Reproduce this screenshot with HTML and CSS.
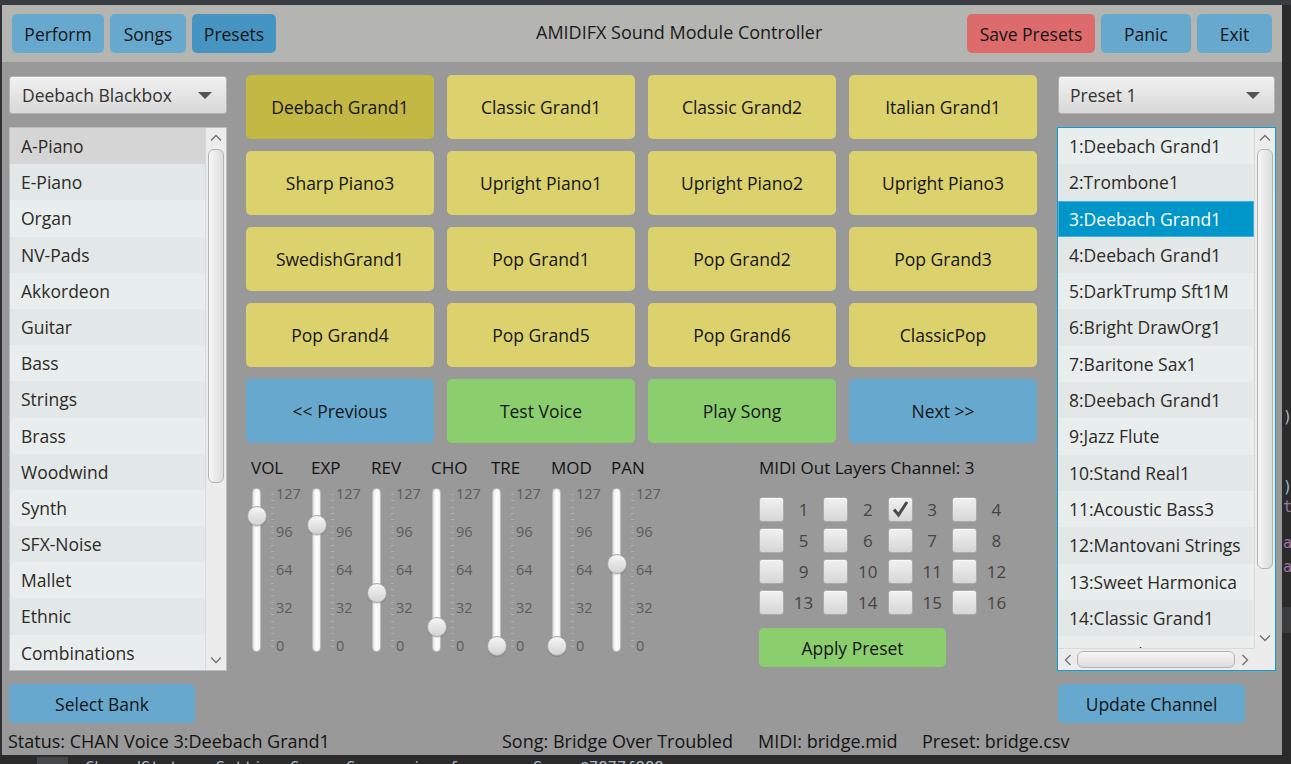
FILE: index.html
```html
<!DOCTYPE html>
<html lang="en">
<head>
<meta charset="utf-8">
<title>AMIDIFX Sound Module Controller</title>
<link rel="stylesheet" href="styles.css">
</head>
<body>
<div class="screen">
  <div class="top-edge"></div>
  <div class="mid">
    <div class="left-edge"></div>
    <div class="window">
      <header class="topbar">
        <div class="group">
          <button class="btn blue w-perform">Perform</button>
          <button class="btn blue w-songs">Songs</button>
          <button class="btn blue active w-presets">Presets</button>
        </div>
        <div class="title">AMIDIFX Sound Module Controller</div>
        <div class="group right-group">
          <button class="btn red w-save">Save Presets</button>
          <button class="btn blue w-panic">Panic</button>
          <button class="btn blue w-exit">Exit</button>
        </div>
      </header>

      <main class="main">
        <section class="side">
          <div class="combo"><span>Deebach Blackbox</span><span class="caret"></span></div>
          <div class="list">
            <ul class="rows">
              <li class="hover">A-Piano</li>
              <li>E-Piano</li>
              <li>Organ</li>
              <li>NV-Pads</li>
              <li>Akkordeon</li>
              <li>Guitar</li>
              <li>Bass</li>
              <li>Strings</li>
              <li>Brass</li>
              <li>Woodwind</li>
              <li>Synth</li>
              <li>SFX-Noise</li>
              <li>Mallet</li>
              <li>Ethnic</li>
              <li>Combinations</li>
            </ul>
            <div class="vscroll">
              <div class="arr"><svg width="12" height="8" viewBox="0 0 12 8"><polyline points="1,6.5 6,1.5 11,6.5" fill="none" stroke="#707070" stroke-width="1.3"/></svg></div>
              <div class="vtrack"><div class="vthumb left-thumb"></div></div>
              <div class="arr"><svg width="12" height="8" viewBox="0 0 12 8"><polyline points="1,1.5 6,6.5 11,1.5" fill="none" stroke="#707070" stroke-width="1.3"/></svg></div>
            </div>
          </div>
          <button class="btn blue side-btn">Select Bank</button>
        </section>

        <section class="center">
          <div class="voices">
            <button class="btn yellow sel">Deebach Grand1</button>
            <button class="btn yellow">Classic Grand1</button>
            <button class="btn yellow">Classic Grand2</button>
            <button class="btn yellow">Italian Grand1</button>
            <button class="btn yellow">Sharp Piano3</button>
            <button class="btn yellow">Upright Piano1</button>
            <button class="btn yellow">Upright Piano2</button>
            <button class="btn yellow">Upright Piano3</button>
            <button class="btn yellow">SwedishGrand1</button>
            <button class="btn yellow">Pop Grand1</button>
            <button class="btn yellow">Pop Grand2</button>
            <button class="btn yellow">Pop Grand3</button>
            <button class="btn yellow">Pop Grand4</button>
            <button class="btn yellow">Pop Grand5</button>
            <button class="btn yellow">Pop Grand6</button>
            <button class="btn yellow">ClassicPop</button>
            <button class="btn blue">&lt;&lt; Previous</button>
            <button class="btn green">Test Voice</button>
            <button class="btn green">Play Song</button>
            <button class="btn blue">Next &gt;&gt;</button>
          </div>

          <div class="lower">
            <div class="sliders">
              <div class="slider">
                <div class="slabel">VOL</div>
                <div class="sbody">
                  <div class="track"></div><div class="ticks"></div>
                  <div class="nums"><span>127</span><span>96</span><span>64</span><span>32</span><span>0</span></div>
                  <div class="thumb" style="top:18px"></div>
                </div>
              </div>
              <div class="slider">
                <div class="slabel">EXP</div>
                <div class="sbody">
                  <div class="track"></div><div class="ticks"></div>
                  <div class="nums"><span>127</span><span>96</span><span>64</span><span>32</span><span>0</span></div>
                  <div class="thumb" style="top:27px"></div>
                </div>
              </div>
              <div class="slider">
                <div class="slabel">REV</div>
                <div class="sbody">
                  <div class="track"></div><div class="ticks"></div>
                  <div class="nums"><span>127</span><span>96</span><span>64</span><span>32</span><span>0</span></div>
                  <div class="thumb" style="top:95px"></div>
                </div>
              </div>
              <div class="slider">
                <div class="slabel">CHO</div>
                <div class="sbody">
                  <div class="track"></div><div class="ticks"></div>
                  <div class="nums"><span>127</span><span>96</span><span>64</span><span>32</span><span>0</span></div>
                  <div class="thumb" style="top:129px"></div>
                </div>
              </div>
              <div class="slider">
                <div class="slabel">TRE</div>
                <div class="sbody">
                  <div class="track"></div><div class="ticks"></div>
                  <div class="nums"><span>127</span><span>96</span><span>64</span><span>32</span><span>0</span></div>
                  <div class="thumb" style="top:148px"></div>
                </div>
              </div>
              <div class="slider">
                <div class="slabel">MOD</div>
                <div class="sbody">
                  <div class="track"></div><div class="ticks"></div>
                  <div class="nums"><span>127</span><span>96</span><span>64</span><span>32</span><span>0</span></div>
                  <div class="thumb" style="top:148px"></div>
                </div>
              </div>
              <div class="slider">
                <div class="slabel">PAN</div>
                <div class="sbody">
                  <div class="track"></div><div class="ticks"></div>
                  <div class="nums"><span>127</span><span>96</span><span>64</span><span>32</span><span>0</span></div>
                  <div class="thumb" style="top:66px"></div>
                </div>
              </div>
            </div>

            <div class="layers">
              <div class="ltitle">MIDI Out Layers Channel: 3</div>
              <div class="cbgrid">
                <div class="cell"><span class="cb"></span><span class="cbl">1</span></div>
                <div class="cell"><span class="cb"></span><span class="cbl">2</span></div>
                <div class="cell"><span class="cb"><svg width="23" height="23" viewBox="0 0 23 23"><polyline points="5,11.5 9.5,17 18,4" fill="none" stroke="#4a4a4a" stroke-width="3"/></svg></span><span class="cbl">3</span></div>
                <div class="cell"><span class="cb"></span><span class="cbl">4</span></div>
                <div class="cell"><span class="cb"></span><span class="cbl">5</span></div>
                <div class="cell"><span class="cb"></span><span class="cbl">6</span></div>
                <div class="cell"><span class="cb"></span><span class="cbl">7</span></div>
                <div class="cell"><span class="cb"></span><span class="cbl">8</span></div>
                <div class="cell"><span class="cb"></span><span class="cbl">9</span></div>
                <div class="cell"><span class="cb"></span><span class="cbl">10</span></div>
                <div class="cell"><span class="cb"></span><span class="cbl">11</span></div>
                <div class="cell"><span class="cb"></span><span class="cbl">12</span></div>
                <div class="cell"><span class="cb"></span><span class="cbl">13</span></div>
                <div class="cell"><span class="cb"></span><span class="cbl">14</span></div>
                <div class="cell"><span class="cb"></span><span class="cbl">15</span></div>
                <div class="cell"><span class="cb"></span><span class="cbl">16</span></div>
              </div>
              <button class="btn green apply">Apply Preset</button>
            </div>
          </div>
        </section>

        <section class="side rside">
          <div class="combo"><span>Preset 1</span><span class="caret"></span></div>
          <div class="list focused">
            <ul class="rows">
              <li>1:Deebach Grand1</li>
              <li>2:Trombone1</li>
              <li class="selected">3:Deebach Grand1</li>
              <li>4:Deebach Grand1</li>
              <li>5:DarkTrump Sft1M</li>
              <li>6:Bright DrawOrg1</li>
              <li>7:Baritone Sax1</li>
              <li>8:Deebach Grand1</li>
              <li>9:Jazz Flute</li>
              <li>10:Stand Real1</li>
              <li>11:Acoustic Bass3</li>
              <li>12:Mantovani Strings</li>
              <li>13:Sweet Harmonica</li>
              <li>14:Classic Grand1</li>
              <li>15:Upright Piano1</li>
            </ul>
            <div class="vscroll">
              <div class="arr"><svg width="12" height="8" viewBox="0 0 12 8"><polyline points="1,6.5 6,1.5 11,6.5" fill="none" stroke="#707070" stroke-width="1.3"/></svg></div>
              <div class="vtrack"><div class="vthumb right-thumb"></div></div>
              <div class="arr"><svg width="12" height="8" viewBox="0 0 12 8"><polyline points="1,1.5 6,6.5 11,1.5" fill="none" stroke="#707070" stroke-width="1.3"/></svg></div>
            </div>
            <div class="hscroll">
              <div class="harr"><svg width="8" height="12" viewBox="0 0 8 12"><polyline points="6.5,1 1.5,6 6.5,11" fill="none" stroke="#707070" stroke-width="1.3"/></svg></div>
              <div class="htrack"><div class="hthumb"></div></div>
              <div class="harr"><svg width="8" height="12" viewBox="0 0 8 12"><polyline points="1.5,1 6.5,6 1.5,11" fill="none" stroke="#707070" stroke-width="1.3"/></svg></div>
            </div>
            <div class="corner"></div>
          </div>
          <button class="btn blue side-btn update">Update Channel</button>
        </section>
      </main>

      <footer class="status">
        <span>Status: CHAN Voice 3:Deebach Grand1</span>
        <span>Song: Bridge Over Troubled</span>
        <span>MIDI: bridge.mid</span>
        <span>Preset: bridge.csv</span>
      </footer>
    </div>
    <div class="right-edge">
      <span class="g g1">)</span>
      <span class="g g2">)</span>
      <span class="g g3 purple">t</span>
      <span class="g g4 purple">a</span>
      <span class="g g5 purple">a</span>
      <span class="band"></span>
    </div>
  </div>
  <div class="bottom-edge">
    <span class="ide-icon"></span>
    <span class="ide-text">CharedStatus: Setting Songs Scene: javafx.scene.Scene@7877f888</span>
  </div>
</div>
</body>
</html>
```

FILE: styles.css
```css
* { box-sizing: border-box; }

html, body {
  margin: 0;
  padding: 0;
}

body {
  width: 1291px;
  height: 764px;
  overflow: hidden;
  background: #2b2b2b;
  font-family: "Open Sans", "Noto Sans", sans-serif;
  color: #1a1a1a;
}

.screen {
  display: flex;
  flex-direction: column;
  width: 1291px;
  height: 764px;
}

.top-edge {
  height: 5px;
  background: #393c40;
}

.mid {
  display: flex;
  height: 750px;
}

.left-edge {
  width: 2px;
  background: #2f3134;
}

.window {
  width: 1280px;
  height: 750px;
  display: flex;
  flex-direction: column;
  background: #999999;
}

/* ---------- top bar ---------- */
.topbar {
  height: 57px;
  flex: none;
  background: #b4b5b1;
  display: flex;
  align-items: flex-start;
  padding: 9px 10px 0 10px;
}

.group {
  display: flex;
  gap: 6px;
}

.right-group {
  margin-left: auto;
}

.title {
  margin-left: 260px;
  height: 36px;
  line-height: 36px;
  font-size: 18px;
  color: #1a1a1a;
}

.btn {
  border: none;
  border-radius: 5px;
  font-family: inherit;
  font-size: 17.5px;
  color: #161616;
  padding: 0;
  height: 40px;
  cursor: default;
}

.topbar .btn {
  height: 39px;
}

.blue { background: #67a8cf; }
.blue.active { background: #4694c1; }
.red { background: #dd6b6b; }
.yellow { background: #dbd16d; }
.yellow.sel { background: #c3b843; }
.green { background: #8bce6e; }

.w-perform { width: 92px; }
.w-songs { width: 76px; }
.w-presets { width: 84px; }
.w-save { width: 128px; }
.w-panic { width: 90px; }
.w-exit { width: 75px; }

/* ---------- main ---------- */
.main {
  flex: none;
  height: 661px;
  display: grid;
  grid-template-columns: 218px 791px 220px;
  column-gap: 19px;
  padding: 13px 0 0 7px;
}

.side {
  display: flex;
  flex-direction: column;
}

.rside {
  margin-left: 1px;
}

.combo {
  margin-top: 1px;
  height: 38px;
  border: 1px solid #b2b2b2;
  border-radius: 3px;
  background: linear-gradient(#f1f1f1, #d8d8d8);
  box-shadow: inset 0 1px 0 #fafafa;
  display: flex;
  align-items: center;
  justify-content: space-between;
  padding: 0 14px 0 12px;
  font-size: 17.5px;
  color: #333;
}

.rside .combo {
  margin-left: 1px;
  margin-right: 1px;
  padding-left: 11px;
}

.caret {
  width: 0;
  height: 0;
  border-left: 7px solid transparent;
  border-right: 7px solid transparent;
  border-top: 7px solid #545454;
}

.list {
  margin-top: 13px;
  height: 544px;
  border: 1px solid #bdbdbd;
  background: #e8eded;
  display: grid;
  grid-template-columns: 1fr 21px;
  overflow: hidden;
}

.list.focused {
  border-color: #0a9fd6;
  grid-template-rows: 1fr 22px;
}

.rows {
  list-style: none;
  margin: 0;
  padding: 0;
  overflow: hidden;
  font-size: 17.5px;
  color: #2e2a26;
}

.rows li {
  height: 36.2px;
  line-height: 36px;
  padding-left: 11px;
  background: #e8eeee;
  white-space: nowrap;
}

.focused .rows li {
  height: 36.3px;
  line-height: 36.3px;
}

.rows li:nth-child(even) {
  background: #e2e7e7;
}

.rows li.hover {
  background: #d5d5d5;
}

.rows li.selected {
  background: #0096c9;
  color: #ffffff;
  box-shadow: inset 0 0 0 1px #49b2d9;
}

.vscroll {
  display: flex;
  flex-direction: column;
  background: #ececec;
  border-left: 1px solid #dadada;
}

.arr {
  height: 20px;
  flex: none;
  display: flex;
  align-items: center;
  justify-content: center;
}

.vtrack {
  flex: 1;
}

.vthumb {
  margin: 1px 2px 0 2px;
  border: 1px solid #b3b3b3;
  border-radius: 6px;
  background: linear-gradient(to right, #f6f6f6, #dcdcdc);
}

.left-thumb { height: 334px; }
.right-thumb { height: 420px; }

.hscroll {
  display: flex;
  background: #ececec;
  border-top: 1px solid #dadada;
}

.harr {
  width: 19px;
  flex: none;
  display: flex;
  align-items: center;
  justify-content: center;
}

.htrack {
  flex: 1;
  display: flex;
  align-items: center;
}

.hthumb {
  width: 100%;
  height: 17px;
  border: 1px solid #b3b3b3;
  border-radius: 6px;
  background: linear-gradient(#f6f6f6, #dcdcdc);
}

.corner {
  background: #ececec;
}

.side-btn {
  margin-top: 13px;
  height: 39px;
  width: 186px;
}

.side-btn.update {
  margin-left: 1px;
  width: 187px;
}

/* ---------- center ---------- */
.center {
  display: flex;
  flex-direction: column;
}

.voices {
  display: grid;
  grid-template-columns: repeat(4, 188px);
  grid-auto-rows: 64px;
  column-gap: 13px;
  row-gap: 12px;
}

.voices .btn {
  height: 64px;
}

.lower {
  display: flex;
  margin-top: 14px;
}

.sliders {
  width: 513px;
  padding-left: 5px;
  display: flex;
}

.slider {
  width: 60px;
}

.slabel {
  height: 22px;
  line-height: 22px;
  font-size: 17px;
  color: #141414;
}

.sbody {
  position: relative;
  margin-top: 9px;
  height: 164px;
  display: flex;
}

.track {
  width: 9px;
  margin-left: 1px;
  height: 164px;
  border: 1px solid #bdbdbd;
  border-radius: 5px;
  background: linear-gradient(to right, #dedede, #ffffff 45%, #f2f2f2);
}

.ticks {
  margin-left: 10px;
  margin-top: 6px;
  width: 3px;
  height: 153px;
  background: repeating-linear-gradient(to bottom, #b0b0b0 0 1px, transparent 1px 6.333px);
}

.nums {
  margin-left: 2px;
  margin-top: -4px;
  height: 172px;
  display: flex;
  flex-direction: column;
  justify-content: space-between;
  font-size: 14.5px;
  color: #5c5c5c;
}

.nums span {
  line-height: 20px;
}

.thumb {
  position: absolute;
  left: -4px;
  width: 20px;
  height: 20px;
  border-radius: 50%;
  border: 1px solid #a6a6a6;
  background: linear-gradient(#f6f6f6, #d2d2d2);
  box-shadow: 0 1px 1px rgba(0, 0, 0, 0.15);
}

.layers {
  display: flex;
  flex-direction: column;
}

.ltitle {
  height: 22px;
  line-height: 22px;
  font-size: 17px;
  color: #141414;
}

.cbgrid {
  margin-top: 18px;
  display: grid;
  grid-template-columns: repeat(4, 64.33px);
  grid-auto-rows: 25px;
  row-gap: 6px;
}

.cell {
  display: flex;
  align-items: center;
}

.cb {
  width: 25px;
  height: 25px;
  flex: none;
  border: 1px solid #ababab;
  border-radius: 3px;
  background: linear-gradient(#f1f1f1, #d6d6d6);
  box-shadow: inset 0 1px 0 #fafafa;
  display: flex;
  align-items: center;
  justify-content: center;
}

.cbl {
  width: 39px;
  text-align: center;
  font-size: 17px;
  color: #444;
}

.apply {
  margin-top: 13px;
  width: 187px;
  height: 39px;
}

/* ---------- status ---------- */
.status {
  flex: none;
  height: 32px;
  padding: 6px 0 0 6px;
  display: grid;
  grid-template-columns: 494px 256px 164px auto;
  font-size: 18px;
  line-height: 24px;
  color: #141414;
  white-space: nowrap;
}

/* ---------- ide backdrop ---------- */
.right-edge {
  width: 9px;
  background: #2b2b2b;
  overflow: hidden;
  display: flex;
  flex-direction: column;
  font-family: "DejaVu Sans Mono", monospace;
  font-size: 15px;
  color: #a9b7c6;
}

.g {
  display: block;
  height: 20px;
  line-height: 20px;
  margin-left: 1px;
}

.g1 { margin-top: 402px; }
.g2 { margin-top: 50px; }
.g3 { margin-top: 0; }
.g4 { margin-top: 16px; }
.g5 { margin-top: 4px; }
.purple { color: #9876aa; }

.band {
  display: block;
  margin-top: 30px;
  height: 26px;
  background: #3a3c3e;
}

.bottom-edge {
  height: 9px;
  background: #2b2b2b;
  overflow: hidden;
  display: flex;
  align-items: flex-start;
}

.ide-icon {
  margin: 2px 0 0 37px;
  width: 31px;
  height: 12px;
  background: #45484b;
}

.ide-text {
  margin-left: 17px;
  padding-top: 4px;
  font-family: "DejaVu Sans Mono", monospace;
  font-size: 15.5px;
  line-height: 18px;
  color: #a9b7c6;
  white-space: nowrap;
}
```
